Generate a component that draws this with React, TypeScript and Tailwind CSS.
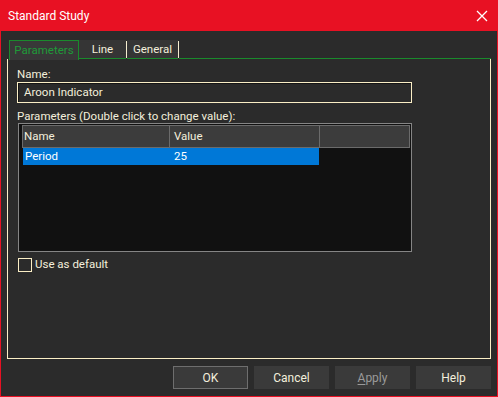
import React from "react";

const font = { fontFamily: 'Roboto, "Segoe UI", Arial, sans-serif' };

export default function App() {
  return (
    <div
      className="w-[498px] h-[397px] flex flex-col bg-[#2b2b2b] border-l border-r border-b border-[#e81123] text-[11.5px] text-[#f3efdc] overflow-hidden"
      style={font}
    >
      {/* Title bar */}
      <div className="h-[31px] shrink-0 bg-[#e81123] flex items-center justify-between pl-[8px] pr-[9px] -mx-px">
        <span className="text-white text-[12px] leading-none">Standard Study</span>
        <svg width="12" height="12" viewBox="0 0 12 12" className="mr-[1px]">
          <path d="M1 1 L11 11 M11 1 L1 11" stroke="white" strokeWidth="1.3" />
        </svg>
      </div>

      {/* Body */}
      <div className="flex-1 flex flex-col pt-[9px] pl-[6px] pr-[6px] pb-[7px]">
        {/* Tabs */}
        <div className="flex h-[19px] pl-[2px] shrink-0">
          <div className="w-[70px] h-[20px] border border-[#1a8a2c] border-b-0 bg-[#383838] flex items-center justify-center text-[#1f9a38] relative z-10">
            Parameters
          </div>
          <div className="w-[47px] h-[19px] bg-[#353535] flex items-center justify-center border-b border-[#1a8a2c]">
            <span className="mt-[1px]">Line</span>
          </div>
          <div className="w-[1px] h-[17px] mt-[1px] bg-[#f5eed0]" />
          <div className="w-[51px] h-[19px] bg-[#353535] flex items-center justify-center border-b border-[#1a8a2c]">
            <span className="mt-[1px]">General</span>
          </div>
          <div className="w-[1px] h-[17px] mt-[1px] bg-[#f5eed0]" />
          <div className="flex-1 border-b border-[#1a8a2c]" />
        </div>

        {/* Panel */}
        <div className="flex-1 flex flex-col border-l border-r border-b border-[#fbefc6] w-[484px] pl-[9px] pt-[7px]">
          <div className="h-[16px] leading-[16px]">Name:</div>
          <div className="w-[395px] h-[21px] border border-[#fbefc6]">
            <div className="w-full h-full border-t border-l border-[#151515] bg-[#2b2b2b] flex items-center pl-[5px] leading-none">
              Aroon Indicator
            </div>
          </div>
          <div className="mt-[5px] h-[16px] leading-[16px]">Parameters (Double click to change value):</div>
          <div className="-mt-px ml-[1px] w-[394px] h-[129px] border border-[#858585] bg-[#111111] pt-[1px] pl-[3px] pr-[1px]">
            <div className="flex h-[23px] bg-[#3c3c3c] border border-[#6b6b6b]">
              <div className="w-[147px] border-r border-[#6b6b6b] flex items-center pl-[1px]">Name</div>
              <div className="w-[150px] border-r border-[#6b6b6b] flex items-center pl-[4px]">Value</div>
              <div className="flex-1" />
            </div>
            <div className="flex h-[17px] w-[296px] ml-[1px] bg-[#0078d7] text-white items-center">
              <div className="w-[146px] pl-[2px]">Period</div>
              <div className="pl-[5px]">25</div>
            </div>
          </div>
          <div className="mt-[6px] ml-[1px] flex items-center h-[14px]">
            <div className="w-[14px] h-[14px] border border-[#fbefc6]" />
            <span className="ml-[3px]">Use as default</span>
          </div>
        </div>

        {/* Buttons */}
        <div className="flex justify-end gap-[6px] mt-[7px] h-[23px] shrink-0">
          <button className="w-[75px] h-[23px] bg-[#3a3a3a] border border-[#6e6e6e] text-[#f3efdc] text-[12px]" style={font}>
            OK
          </button>
          <button className="w-[75px] h-[23px] bg-[#3a3a3a] text-[#f3efdc] text-[12px]" style={font}>
            Cancel
          </button>
          <button className="w-[75px] h-[23px] bg-[#3a3a3a] text-[#9a9a9a] text-[12px]" style={font}>
            <span className="underline underline-offset-2">A</span>pply
          </button>
          <button className="w-[75px] h-[23px] bg-[#3a3a3a] text-[#f3efdc] text-[12px]" style={font}>
            Help
          </button>
        </div>
      </div>
    </div>
  );
}
